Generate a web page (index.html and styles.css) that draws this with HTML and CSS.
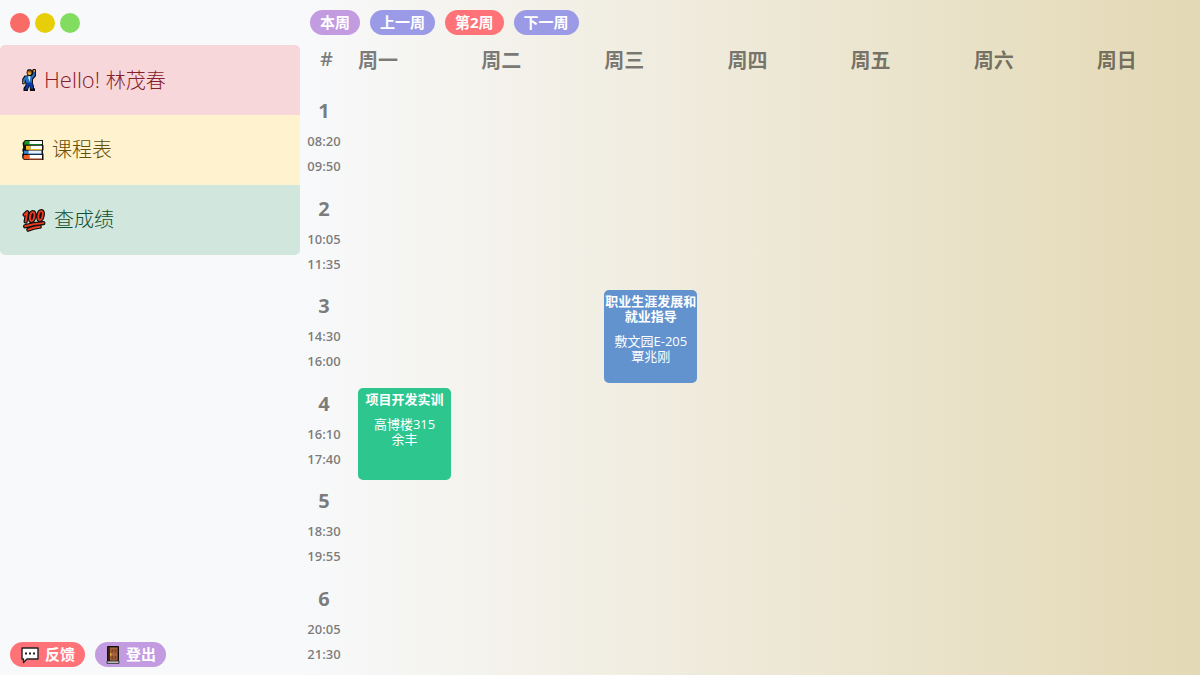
FILE: index.html
```html
<!DOCTYPE html>
<html lang="zh-CN">
<head>
<meta charset="utf-8">
<meta name="viewport" content="width=device-width, initial-scale=1">
<title>课程表</title>
<link rel="stylesheet" href="styles.css">
</head>
<body>
<div class="app">
  <aside class="sidebar">
    <div class="window-dots">
      <button class="dot dot-red" type="button" aria-label="关闭"></button>
      <button class="dot dot-yellow" type="button" aria-label="最小化"></button>
      <button class="dot dot-green" type="button" aria-label="最大化"></button>
    </div>
    <nav class="menu">
      <a class="menu-item menu-user" href="#user">
        <svg class="icon-man" viewBox="0 0 14 22" aria-hidden="true">
          <path d="M5 1.500 6 .3h3l1 1.200L11 0h2.500L14 1v6l-3 3.500v4l1 2.500v2l1 .5V22H8l-.5-5-1.500 3.500V22H1.500v-3L3.500 16v-2L2 15.500.2 15V10L2.500 6.500H5.500L4.500 4z" fill="#111"/>
          <path d="M3.500 7.200h6L11.300 5V2.500h1.500v4L10 9.700V14H4v-3.500l-1.500 2.500H1.200v-2.500z" fill="#2a72c4"/>
          <path d="M4.200 13.500H10l1 4v2.300H8.800L7.500 15.500 5 20.500H2.700L4.500 17z" fill="#0b3aa8"/>
          <path d="M6 7.200h2.500L7.500 13z" fill="#d9f2ff"/>
          <circle cx="7.500" cy="4" r="2" fill="#eeb13f"/>
          <path d="M5.500 2.500Q7.500 .4 9.500 2.500V3.500H5.500z" fill="#a8621a"/>
          <path d="M11.500 1H13v1.700h-1.500zM1.200 12.800h1.300v1.500H1.200z" fill="#eeb13f"/>
        </svg>
        <span><span class="greeting">Hello! </span>林茂春</span>
      </a>
      <a class="menu-item menu-courses" href="#courses">
        <svg class="icon-books" viewBox="0 0 22 22" aria-hidden="true">
          <path d="M3 1h18v5h.5v5l-.5.500v3h.5v6.500H2l-1.800-2v-4l1-1-1-3 1-2.500L.5 4z" fill="#111"/>
          <path d="M3 2h4.500v3.500H2zM7 4.800h12.500v1H7z" fill="#169a26"/>
          <path d="M7.500 2H20v3H7.500z" fill="#fff"/>
          <path d="M4 6.800h4.500v4H4zM8 9.900h12v1H8z" fill="#efb51b"/>
          <path d="M8.500 6.800H20V10H8.500z" fill="#fff"/>
          <path d="M2 11.800h4.500v3H2zM6 14.200h13.500v1H6z" fill="#3684dd"/>
          <path d="M6.500 11.600h13v2.800h-13z" fill="#e4f2ff"/>
          <path d="M2 16h5.500v4.200h-5l-1.200-1.200zM7 19.400h13v1H7z" fill="#f15a22"/>
          <path d="M7.500 16H20v3.500H7.500z" fill="#fff"/>
        </svg>
        <span>课程表</span>
      </a>
      <a class="menu-item menu-scores" href="#scores">
        <svg class="icon-hundred" viewBox="0 0 23 23" aria-hidden="true">
          <g fill="none" stroke-linecap="round" stroke-linejoin="round">
            <path stroke="#111" stroke-width="4" d="M2.500 6.500 5 4 3.500 13M10.500 4C7.500 4 6.500 12.500 9 12.500S13.500 4 10.500 4zM18.500 3C15.500 3 14.500 11.500 17 11.500S21.500 3 18.500 3zM3 17.500Q11 15 20.500 14.500M6 20.800Q11 18.500 17 18"/>
            <path stroke="#ed3b20" stroke-width="1.800" d="M2.500 6.500 5 4 3.500 13M10.500 4C7.500 4 6.500 12.500 9 12.500S13.500 4 10.500 4zM18.500 3C15.500 3 14.500 11.500 17 11.500S21.500 3 18.500 3zM3 17.500Q11 15 20.500 14.500M6 20.800Q11 18.500 17 18"/>
          </g>
        </svg>
        <span>查成绩</span>
      </a>
    </nav>
    <div class="sidebar-actions">
      <button class="pill pill-red" type="button">
        <svg class="icon-chat" viewBox="0 0 20 18" aria-hidden="true">
          <path d="M2 2h16v11H7l-3.500 3.500V13H2z" fill="#fff" stroke="#222" stroke-width="1.400" stroke-linejoin="round"/>
          <path d="M5 6.500h2v2H5zM9 6.500h2v2H9zM13 6.500h2v2h-2z" fill="#222"/>
        </svg>
        <span>反馈</span>
      </button>
      <button class="pill pill-purple" type="button">
        <svg class="icon-door" viewBox="0 0 16 18" aria-hidden="true">
          <path d="M2.500 .5h11V15h-11z" fill="#3b2418" stroke="#111"/>
          <path d="M5 1.500h7.500V15H5z" fill="#a5623d"/>
          <path d="M6.500 3h1.800v3.500H6.500zM9.500 3h1.800v3.500H9.500zM6.500 10h1.800v3.500H6.500zM9.500 10h1.800v3.500H9.500z" fill="#7d4426"/>
          <path d="M5 7.500h1.500v2H5z" fill="#f0bf32"/>
          <path d="M2 15h12v2.400H2z" fill="#c7cbd0" stroke="#222" stroke-width=".8"/>
        </svg>
        <span>登出</span>
      </button>
    </div>
  </aside>

  <main class="main">
    <div class="toolbar">
      <button class="pill pill-purple" type="button">本周</button>
      <button class="pill pill-blue" type="button">上一周</button>
      <button class="pill pill-red" type="button">第2周</button>
      <button class="pill pill-blue" type="button">下一周</button>
    </div>
    <table class="timetable">
      <thead>
        <tr>
          <th class="corner" scope="col">#</th>
          <th class="day" scope="col">周一</th>
          <th class="day" scope="col">周二</th>
          <th class="day" scope="col">周三</th>
          <th class="day" scope="col">周四</th>
          <th class="day" scope="col">周五</th>
          <th class="day" scope="col">周六</th>
          <th class="day" scope="col">周日</th>
        </tr>
      </thead>
      <tbody>
        <tr>
          <th class="period" scope="row"><span class="number">1</span><time>08:20</time><time>09:50</time></th>
          <td></td><td></td><td></td><td></td><td></td><td></td><td></td>
        </tr>
        <tr>
          <th class="period" scope="row"><span class="number">2</span><time>10:05</time><time>11:35</time></th>
          <td></td><td></td><td></td><td></td><td></td><td></td><td></td>
        </tr>
        <tr>
          <th class="period" scope="row"><span class="number">3</span><time>14:30</time><time>16:00</time></th>
          <td></td><td></td>
          <td><div class="course course-blue"><strong class="course-name">职业生涯发展和就业指导</strong><span>敷文园E-205<br>覃兆刚</span></div></td>
          <td></td><td></td><td></td><td></td>
        </tr>
        <tr>
          <th class="period" scope="row"><span class="number">4</span><time>16:10</time><time>17:40</time></th>
          <td><div class="course course-green"><strong class="course-name">项目开发实训</strong><span>高博楼315<br>余丰</span></div></td>
          <td></td><td></td><td></td><td></td><td></td><td></td>
        </tr>
        <tr>
          <th class="period" scope="row"><span class="number">5</span><time>18:30</time><time>19:55</time></th>
          <td></td><td></td><td></td><td></td><td></td><td></td><td></td>
        </tr>
        <tr>
          <th class="period" scope="row"><span class="number">6</span><time>20:05</time><time>21:30</time></th>
          <td></td><td></td><td></td><td></td><td></td><td></td><td></td>
        </tr>
      </tbody>
    </table>
  </main>
</div>
</body>
</html>
```
FILE: styles.css
```css
* {
  box-sizing: border-box;
}

body {
  margin: 0;
  font-family: "Open Sans", "Noto Sans CJK SC", sans-serif;
  background: #f8f9fb;
}

.app {
  display: grid;
  grid-template-columns: 300px 1fr;
  min-height: 100vh;
}

/* Sidebar */
.sidebar {
  display: flex;
  flex-direction: column;
}

.window-dots {
  display: flex;
  gap: 5px;
  padding: 13px 10px 12px;
}

.dot {
  width: 20px;
  height: 20px;
  padding: 0;
  border: 0;
  border-radius: 50%;
}

.dot-red { background: #f96b66; }
.dot-yellow { background: #e8ce08; }
.dot-green { background: #82dc60; }

.menu {
  border-radius: 5px;
  overflow: hidden;
}

.menu-item {
  display: flex;
  align-items: center;
  gap: 8px;
  height: 70px;
  padding: 0 22px;
  font-size: 20px;
  font-weight: 300;
  line-height: 30px;
  text-decoration: none;
}

.menu-user { background: #f7d7da; color: #842029; }
.menu-courses { background: #fff2cf; color: #664d03; }
.menu-scores { background: #d1e6dd; color: #0f5132; }

.greeting { font-size: 22px; }

.icon-man { width: 14px; height: 22px; }
.icon-books { width: 22px; height: 22px; }
.icon-hundred { width: 24px; height: 24px; }

.sidebar-actions {
  display: flex;
  gap: 10px;
  margin-top: auto;
  padding: 8px 10px;
}

/* Rounded buttons */
.pill {
  display: flex;
  align-items: center;
  gap: 5px;
  height: 25px;
  padding: 0 10px;
  border: 0;
  border-radius: 13px;
  color: #fff;
  font-family: inherit;
  font-size: 15px;
  font-weight: 700;
  line-height: 25px;
  white-space: nowrap;
}

.pill-red { background: #ff7378; }
.pill-purple { background: #c29be0; }
.pill-blue { background: #9b9ae6; }

.icon-chat { width: 20px; height: 18px; }
.icon-door { width: 16px; height: 18px; }

/* Timetable */
.main {
  display: flex;
  flex-direction: column;
  background: linear-gradient(to right, #f8f9fb, #e4d9b5);
}

.toolbar {
  display: flex;
  gap: 10px;
  padding: 10px;
}

.timetable {
  display: grid;
  flex: 1;
  grid-template-columns: 38px repeat(7, minmax(0, 1fr));
  grid-template-rows: 45px repeat(6, 1fr);
  color: rgba(0, 0, 0, 0.52);
}

.timetable thead,
.timetable tbody,
.timetable tr {
  display: contents;
}

.timetable th,
.timetable td {
  padding: 0;
}

.timetable .corner,
.timetable .day {
  padding-left: 20px;
  font-size: 20px;
  text-align: left;
}

.timetable .corner {
  font-weight: 600;
  line-height: 28px;
}

.timetable .day {
  font-weight: 700;
  line-height: 32px;
}

.timetable .period {
  display: flex;
  flex-direction: column;
  align-items: center;
  width: 48px;
  padding-top: 5px;
  font-size: 13px;
  font-weight: 600;
  line-height: 25px;
}

.number {
  margin-bottom: 2px;
  font-size: 20px;
  font-weight: 700;
  line-height: 32px;
}

.timetable td {
  display: flex;
  padding: 5px 10px 0 20px;
}

.course {
  display: flex;
  flex-direction: column;
  flex: 1;
  padding-top: 4px;
  border-radius: 5px;
  color: #fff;
  font-size: 13px;
  line-height: 15px;
  text-align: center;
}

.course-name {
  margin-bottom: 10px;
}

.course-blue { background: #6293cf; }
.course-green { background: #2dc68f; }
```
